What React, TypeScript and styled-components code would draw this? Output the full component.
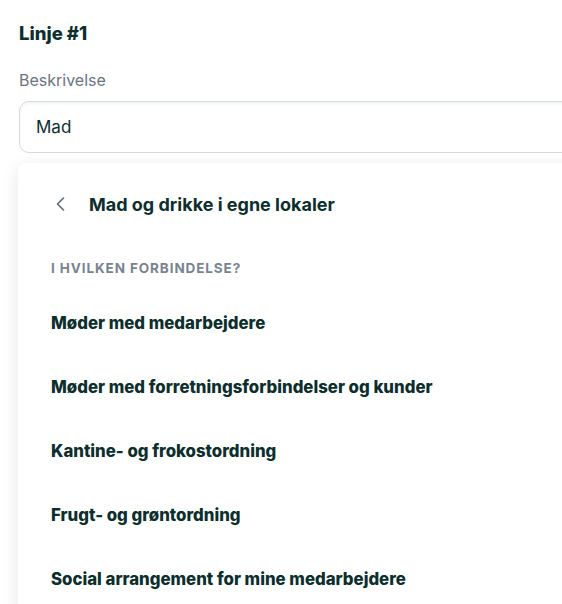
import React from 'react';
import styled, { createGlobalStyle } from 'styled-components';

const GlobalStyle = createGlobalStyle`
  html, body {
    margin: 0;
    padding: 0;
    background: #ffffff;
    font-family: Inter, 'Noto Sans', sans-serif;
    overflow: hidden;
  }
`;

const Page = styled.div`
  position: relative;
  width: 562px;
  height: 604px;
  overflow: hidden;
`;

const Form = styled.div`
  display: flex;
  flex-direction: column;
  padding: 22px 0 0 19px;
  width: 640px;
`;

const Title = styled.h2`
  margin: 0;
  font-size: 18.5px;
  line-height: 22px;
  font-weight: 800;
  color: #0c2e2d;
`;

const Label = styled.label`
  margin-top: 26px;
  font-size: 16px;
  line-height: 20px;
  color: #6c7480;
`;

const Input = styled.div`
  margin-top: 11px;
  height: 52px;
  box-sizing: border-box;
  display: flex;
  align-items: center;
  padding: 0 16px;
  border: 1px solid #d6d9dd;
  border-radius: 10px;
  box-shadow: inset 0 2px 3px rgba(20, 30, 50, 0.05);
  font-size: 17px;
  color: #0c2e2d;
`;

const Footer = styled.div`
  margin-top: 374px;
  height: 20px;
  background: #eceef2;
  border-top: 1px solid #e3e5ea;
`;

const Popup = styled.div`
  position: absolute;
  top: 163px;
  left: 18px;
  width: 620px;
  height: 520px;
  background: #ffffff;
  border-radius: 8px 0 0 0;
  box-shadow: 0 4px 18px rgba(20, 30, 50, 0.1);
  padding: 21px 0 0 33px;
  box-sizing: border-box;
`;

const Header = styled.div`
  display: flex;
  align-items: center;
  gap: 20px;
  height: 40px;
`;

const Back = styled.span`
  display: flex;
  align-items: center;
  justify-content: center;
  width: 18px;
  color: #5e6971;
`;

const HeaderTitle = styled.span`
  font-size: 18px;
  font-weight: 700;
  color: #0c2e2d;
`;

const Section = styled.div`
  margin-top: 36px;
  font-size: 13.5px;
  line-height: 16px;
  font-weight: 700;
  letter-spacing: 0.9px;
  text-transform: uppercase;
  color: #7a8391;
`;

const List = styled.ul`
  list-style: none;
  margin: 15px 0 0;
  padding: 0;
`;

const Item = styled.li`
  height: 64px;
  display: flex;
  align-items: center;
  font-size: 16.8px;
  font-weight: 800;
  color: #0c2e2d;
`;

const options = [
  'Møder med medarbejdere',
  'Møder med forretningsforbindelser og kunder',
  'Kantine- og frokostordning',
  'Frugt- og grøntordning',
  'Social arrangement for mine medarbejdere',
];

const App = () => (
  <Page>
    <GlobalStyle />
    <Form>
      <Title>Linje #1</Title>
      <Label>Beskrivelse</Label>
      <Input>Mad</Input>
      <Footer />
    </Form>
    <Popup>
      <Header>
        <Back>
          <svg width='9' height='14' viewBox='0 0 9 14' fill='none'>
            <path d='M7.5 1 L1.5 7 L7.5 13' stroke='currentColor' strokeWidth='1.6' strokeLinecap='round' strokeLinejoin='round' />
          </svg>
        </Back>
        <HeaderTitle>Mad og drikke i egne lokaler</HeaderTitle>
      </Header>
      <Section>I hvilken forbindelse?</Section>
      <List>
        {options.map((o) => (
          <Item key={o}>{o}</Item>
        ))}
      </List>
    </Popup>
  </Page>
);

export default App;
